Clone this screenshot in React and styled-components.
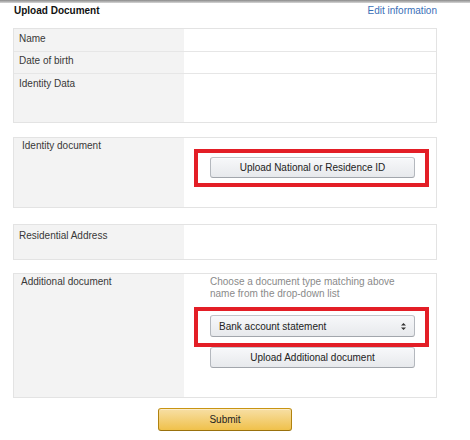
import React from 'react'
import styled, { createGlobalStyle } from 'styled-components'

const GlobalStyle = createGlobalStyle`
	body {
		margin: 0;
		background: #fff;
		font-family: 'Liberation Sans', Arial, sans-serif;
		font-size: 10px;
		color: #333;
	}
`

const Page = styled.div`
	width: 470px;
	height: 440px;
	overflow: hidden;
	background: #fff;
`

const TopShade = styled.div`
	height: 3px;
	background: linear-gradient(#8a8a8a, #d6d6d6);
`

const Content = styled.div`
	width: 424px;
	margin-left: 13px;
	display: flex;
	flex-direction: column;
`

const Header = styled.div`
	display: flex;
	justify-content: space-between;
	align-items: center;
	height: 12px;
	line-height: 12px;
	margin-top: 2px;
	padding-left: 1px;
`

const Title = styled.h1`
	margin: 0;
	font-size: 10px;
	font-weight: bold;
	color: #111;
`

const EditLink = styled.a`
	color: #3a6fb7;
	text-decoration: none;
	font-size: 10px;
	cursor: pointer;
`

const Section = styled.div`
	margin-top: ${(p) => p.$top}px;
	border: 1px solid #e3e3e3;
	background: #fff;
`

const Row = styled.div`
	display: grid;
	grid-template-columns: 170px 1fr;
	box-sizing: border-box;
	height: ${(p) => p.$height}px;
	border-bottom: ${(p) => (p.$divider ? '1px solid #e6e6e6' : 'none')};
`

const Label = styled.div`
	background: #f3f3f3;
	padding: ${(p) => p.$pt ?? 4}px 6px 0 ${(p) => p.$pl ?? 5}px;
	line-height: 12px;
	color: #383838;
`

const Value = styled.div`
	display: flex;
	flex-direction: column;
	align-items: flex-start;
	padding: ${(p) => p.$pt ?? 0}px 0 0 10px;
`

const Hint = styled.p`
	margin: 0 0 7px 16px;
	width: 200px;
	line-height: 12px;
	color: #8a8a8a;
`

const Highlight = styled.div`
	width: 235px;
	box-sizing: border-box;
	border: 4px solid #e31e26;
	padding: 4px 10px ${(p) => p.$pb}px 12px;
`

const Button = styled.button`
	display: block;
	width: 205px;
	height: 21px;
	margin-left: ${(p) => p.$ml ?? 0}px;
	box-sizing: border-box;
	border: 1px solid #adb1b8;
	border-color: #c2c5ca #b4b8be #a2a6ac;
	border-radius: 3px;
	background: linear-gradient(#f7f8fa, #e7e9ec);
	box-shadow: inset 0 1px 0 rgba(255, 255, 255, 0.6);
	font-family: 'Liberation Sans', Arial, sans-serif;
	font-size: 10px;
	color: #222;
	padding: 0;
	cursor: pointer;
`

const Select = styled.div`
	display: flex;
	justify-content: space-between;
	align-items: center;
	width: 205px;
	height: 22px;
	box-sizing: border-box;
	padding: 0 8px;
	border: 1px solid #adb1b8;
	border-color: #c2c5ca #b4b8be #a2a6ac;
	border-radius: 3px;
	background: linear-gradient(#f7f8fa, #e7e9ec);
	color: #222;
	font-size: 10px;
`

const Footer = styled.div`
	display: flex;
	justify-content: center;
	margin-top: 10px;
`

const SubmitButton = styled.button`
	width: 134px;
	height: 23px;
	box-sizing: border-box;
	border: 1px solid #a88734;
	border-color: #c89411 #b0820f #99710d;
	border-radius: 3px;
	background: linear-gradient(#f7dfa5, #f0c14b);
	box-shadow: inset 0 1px 0 rgba(255, 255, 255, 0.4);
	font-family: 'Liberation Sans', Arial, sans-serif;
	font-size: 10px;
	color: #222;
	cursor: pointer;
`

const Arrows = () => (
	<svg width='5' height='7' viewBox='0 0 5 7'>
		<path d='M2.5 0 L5 2.6 H0 Z M2.5 7 L5 4.4 H0 Z' fill='#333' />
	</svg>
)

export default function App() {
	return (
		<Page>
			<GlobalStyle />
			<TopShade />
			<Content>
				<Header>
					<Title>Upload Document</Title>
					<EditLink>Edit information</EditLink>
				</Header>

				<Section $top={11}>
					<Row $height={23} $divider>
						<Label>Name</Label>
						<Value />
					</Row>
					<Row $height={22} $divider>
						<Label $pt={3}>Date of birth</Label>
						<Value />
					</Row>
					<Row $height={48}>
						<Label>Identity Data</Label>
						<Value />
					</Row>
				</Section>

				<Section $top={14}>
					<Row $height={69}>
						<Label $pt={2} $pl={8}>
							Identity document
						</Label>
						<Value $pt={11}>
							<Highlight $pb={5}>
								<Button>Upload National or Residence ID</Button>
							</Highlight>
						</Value>
					</Row>
				</Section>

				<Section $top={16}>
					<Row $height={34}>
						<Label $pt={5}>Residential Address</Label>
						<Value />
					</Row>
				</Section>

				<Section $top={13}>
					<Row $height={123}>
						<Label $pt={2} $pl={7}>
							Additional document
						</Label>
						<Value $pt={2}>
							<Hint>Choose a document type matching above name from the drop-down list</Hint>
							<Highlight $pb={6}>
								<Select>
									<span>Bank account statement</span>
									<Arrows />
								</Select>
							</Highlight>
							<Button $ml={16}>Upload Additional document</Button>
						</Value>
					</Row>
				</Section>

				<Footer>
					<SubmitButton>Submit</SubmitButton>
				</Footer>
			</Content>
		</Page>
	)
}
